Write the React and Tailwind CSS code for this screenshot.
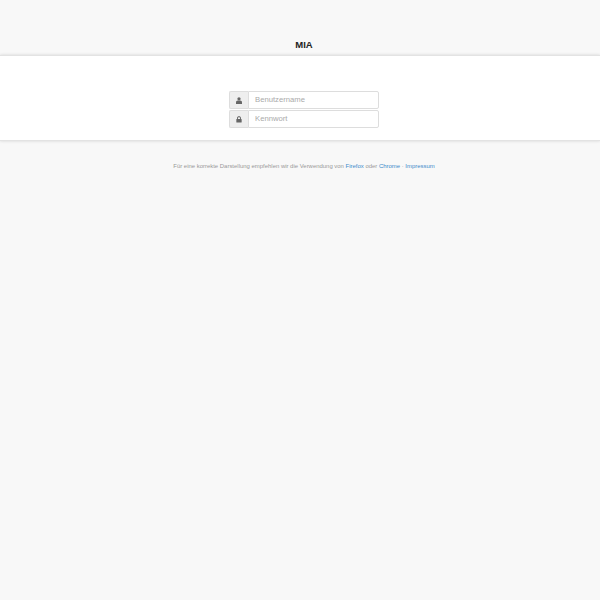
import React from 'react';

const UserIcon = () => (
  <svg width="6" height="7" viewBox="0 0 7 8" fill="#666">
    <circle cx="3.5" cy="2" r="1.9" />
    <path d="M0 8V6.2C0 4.8 1 4 2 4h3c1 0 2 .8 2 2.2V8z" />
  </svg>
);

const LockIcon = () => (
  <svg width="6" height="7" viewBox="0 0 7 8" fill="#666">
    <path d="M1.2 3.5V2.4C1.2 1 2.2.3 3.5.3s2.3.7 2.3 2.1v1.1H4.7V2.4c0-.7-.5-1-1.2-1s-1.2.3-1.2 1v1.1z" />
    <rect x="0.4" y="3.4" width="6.2" height="4.2" rx="0.6" />
  </svg>
);

const Field = ({ icon, placeholder, type }) => (
  <div className="flex h-[18px] w-[150px]">
    <span className="flex w-[19px] items-center justify-center rounded-l-[2px] border border-r-0 border-[#dddddd] bg-[#eeeeee]">
      {icon}
    </span>
    <input
      type={type}
      placeholder={placeholder}
      className="min-w-0 flex-1 rounded-r-[2px] border border-[#dddddd] bg-white px-[6px] text-[7.7px] text-[#555555] outline-none placeholder:text-[#aaaaaa]"
    />
  </div>
);

export default function App() {
  return (
    <div className="min-h-[600px] bg-[#f8f8f8] font-['Liberation_Sans',Arial,sans-serif]">
      <h1 className="pt-[38px] pb-[4px] pl-[8px] text-center text-[9.5px] leading-[13px] font-bold text-[#222222]">MIA</h1>
      <div className="flex flex-col items-center gap-[1px] border-t border-b border-[#e3e3e3] bg-white pt-[35px] pb-[12px] pl-[8px] shadow-[0_0_3px_rgba(0,0,0,0.15)]">
        <Field icon={<UserIcon />} placeholder="Benutzername" type="text" />
        <Field icon={<LockIcon />} placeholder="Kennwort" type="password" />
      </div>
      <p className="mt-[20px] pl-[8px] text-center text-[5.95px] leading-[10px] text-[#999999]">
        Für eine korrekte Darstellung empfehlen wir die Verwendung von <a href="#" className="text-[#428bca]">Firefox</a> oder <a href="#" className="text-[#428bca]">Chrome</a> · <a href="#" className="text-[#428bca]">Impressum</a>
      </p>
    </div>
  );
}
